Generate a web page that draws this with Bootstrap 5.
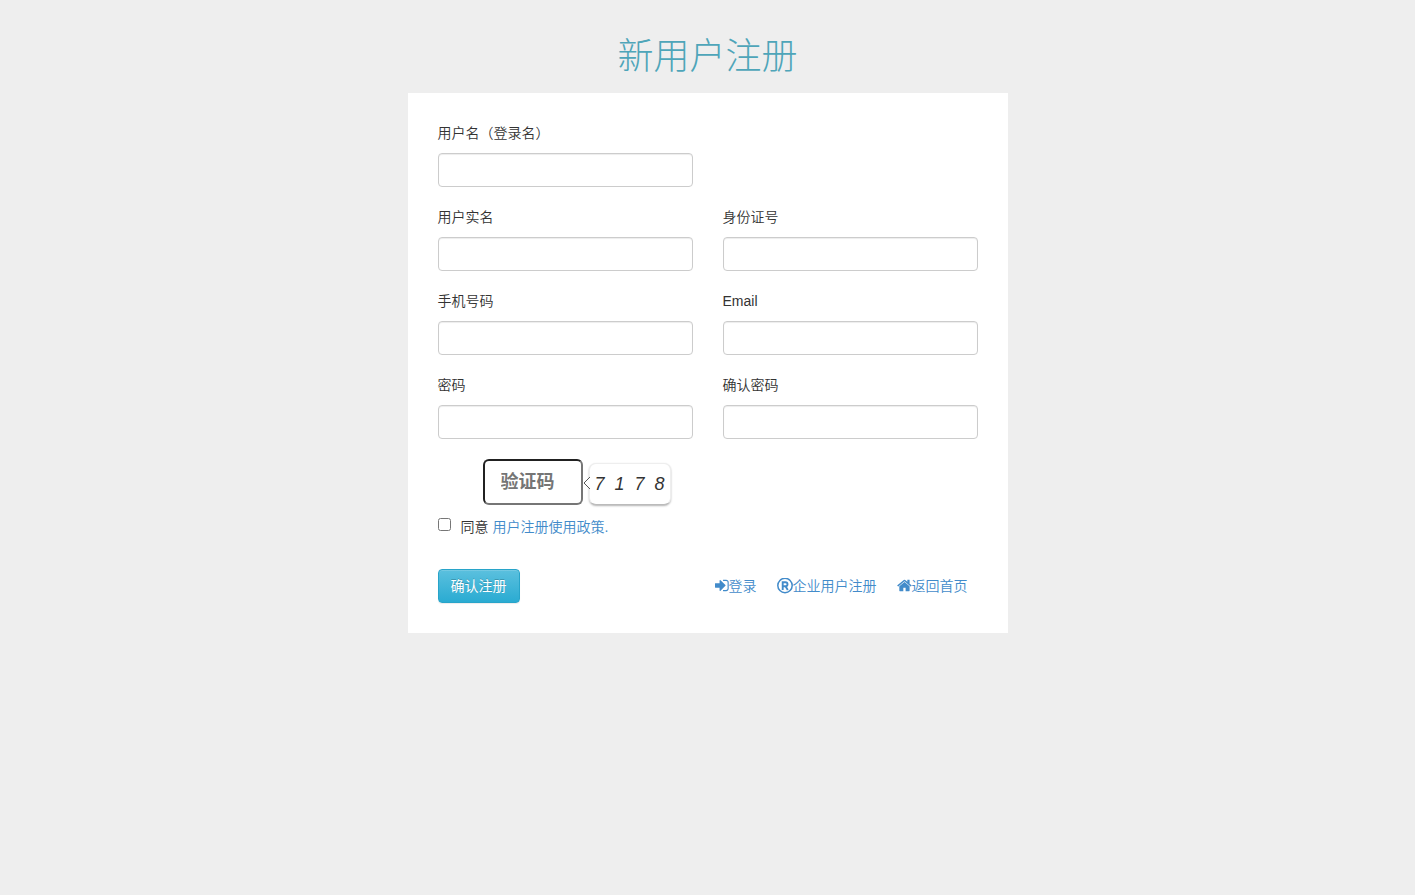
<!DOCTYPE html>
<html lang="zh-CN">
<head>
<meta charset="utf-8">
<meta name="viewport" content="width=device-width, initial-scale=1">
<title>新用户注册</title>
<link href="https://cdn.jsdelivr.net/npm/bootstrap@5.3.0/dist/css/bootstrap.min.css" rel="stylesheet">
<style>
body { background: #eee; color: #333; font: 350 14px/20px "Liberation Sans", "Noto Sans CJK SC", sans-serif; }
a { color: #428bca; text-decoration: none; }
a:hover { text-decoration: underline; }
.register { max-width: 600px; padding-top: 37px; }
.register-title { font-size: 36px; line-height: 40px; font-weight: 300; color: #4ea5b9; margin-bottom: 16px; }
.panel-form { background: #fff; padding: 30px; }
.field-grid { --bs-gutter-x: 30px; --bs-gutter-y: 20px; }
.form-label { margin-bottom: 10px; display: block; }
.form-control { height: 34px; border: 1px solid #ccc; border-radius: 4px; font-size: 14px; box-shadow: inset 0 1px 1px rgba(0,0,0,.075); }
.captcha { margin: 20px 0 12px 45px; gap: 6px; }
.captcha-input { width: 100px; height: 46px; padding: 0 16px; border: 2px inset #767676; border-radius: 6px; font-size: 18px; font-weight: 700; background: #fff; }
.captcha-input::placeholder { color: #757575; opacity: 1; }
.captcha-code { width: 82px; height: 42px; margin-top: 4px; padding: 0 5px; border: 1px solid #eee; border-bottom-color: #bbb; border-radius: 7px; box-shadow: 0 1px 2px rgba(0,0,0,.3); background: #fff; font-size: 18px; font-style: italic; color: #333; }
.captcha-arrow { left: -7px; top: 12px; }
.agree-box { width: 13px; height: 13px; margin: 1px 10px 0 0; }
.actions { margin-top: 32px; }
.btn-register { height: 34px; padding: 0 12px; font-size: 14px; color: #fff; border: 1px solid #28a4c9; border-radius: 4px; background: linear-gradient(#5bc0de, #2aabd2); box-shadow: inset 0 1px 0 rgba(255,255,255,.15), 0 1px 1px rgba(0,0,0,.075); text-shadow: 0 -1px 0 rgba(0,0,0,.2); }
.btn-register:hover { color: #fff; background: #2aabd2; border-color: #28a4c9; }
.links { gap: 20px; padding-right: 10px; }
.links svg { fill: currentColor; flex: none; }
</style>
<script src="https://cdn.jsdelivr.net/npm/bootstrap@5.3.0/dist/js/bootstrap.bundle.min.js" defer></script>
</head>
<body>
<main class="register mx-auto">
  <h1 class="register-title text-center">新用户注册</h1>
  <form class="panel-form">
    <div class="row field-grid">
      <div class="col-sm-6"><label class="form-label" for="login">用户名（登录名）</label><input class="form-control" id="login" type="text"></div>
      <div class="w-100 m-0"></div>
      <div class="col-sm-6"><label class="form-label" for="realname">用户实名</label><input class="form-control" id="realname" type="text"></div>
      <div class="col-sm-6"><label class="form-label" for="idcard">身份证号</label><input class="form-control" id="idcard" type="text"></div>
      <div class="col-sm-6"><label class="form-label" for="phone">手机号码</label><input class="form-control" id="phone" type="text"></div>
      <div class="col-sm-6"><label class="form-label" for="email">Email</label><input class="form-control" id="email" type="email"></div>
      <div class="col-sm-6"><label class="form-label" for="pass">密码</label><input class="form-control" id="pass" type="password"></div>
      <div class="col-sm-6"><label class="form-label" for="pass2">确认密码</label><input class="form-control" id="pass2" type="password"></div>
    </div>
    <div class="captcha d-flex">
      <input class="captcha-input" type="text" placeholder="验证码" aria-label="验证码">
      <div class="captcha-code position-relative d-flex align-items-center justify-content-between">
        <svg class="captcha-arrow position-absolute" width="8" height="14" viewBox="0 0 8 14" aria-hidden="true"><path d="M7 1L1 7l6 6" fill="#fff" stroke="#555"/></svg>
        <span>7</span><span>1</span><span>7</span><span>8</span>
      </div>
    </div>
    <div class="d-flex align-items-start">
      <input class="agree-box" type="checkbox" id="agree">
      <div><label for="agree">同意</label> <a href="#">用户注册使用政策.</a></div>
    </div>
    <div class="actions d-flex flex-wrap align-items-center justify-content-between">
      <button class="btn btn-register" type="submit">确认注册</button>
      <nav class="links d-flex" aria-label="相关链接">
        <a class="d-flex align-items-center" href="#"><svg width="14" height="16" viewBox="0 60 1568 1792" aria-hidden="true"><path d="M1184 896q0 26-19 45l-544 544q-19 19-45 19t-45-19-19-45v-288h-448q-26 0-45-19t-19-45v-384q0-26 19-45t45-19h448v-288q0-26 19-45t45-19 45 19l544 544q19 19 19 45zm352-352v704q0 119-84.500 203.500t-203.500 84.500h-320q-13 0-22.500-9.500t-9.500-22.500q0-4-1-20t-.5-26.500 3-23.500 10-19.500 20.500-6.500h320q66 0 113-47t47-113v-704q0-66-47-113t-113-47h-312l-11.500-1-11.500-3-8-5.500-7-9-2-13.500q0-4-1-20t-.5-26.500 3-23.500 10-19.500 20.500-6.500h320q119 0 203.500 84.500t84.500 203.500z"/></svg>登录</a>
        <a class="d-flex align-items-center" href="#"><svg width="16" height="16" viewBox="0 0 16 16" aria-hidden="true"><circle cx="8" cy="7.500" r="7.200" fill="none" stroke="currentColor" stroke-width="1.500"/><path d="M5.700 12V4.200h2.800a2 2 0 0 1 0 4H5.700m2.800 0L10.800 12" fill="none" stroke="currentColor" stroke-width="1.900"/></svg>企业用户注册</a>
        <a class="d-flex align-items-center" href="#"><svg width="15" height="16" viewBox="60 60 1680 1792" aria-hidden="true"><path d="M1472 992v480q0 26-19 45t-45 19h-384v-384h-256v384h-384q-26 0-45-19t-19-45v-480q0-1 .5-3t.5-3l575-474 575 474q1 2 1 6zm223-69l-62 74q-8 9-21 11h-3q-13 0-21-7l-692-577-692 577q-12 8-24 7-13-2-21-11l-62-74q-8-10-7-23.500t11-21.500l719-599q32-26 76-26t76 26l244 204v-195q0-14 9-23t23-9h192q14 0 23 9t9 23v408l219 182q10 8 11 21.500t-7 23.500z"/></svg>返回首页</a>
      </nav>
    </div>
  </form>
</main>
</body>
</html>
